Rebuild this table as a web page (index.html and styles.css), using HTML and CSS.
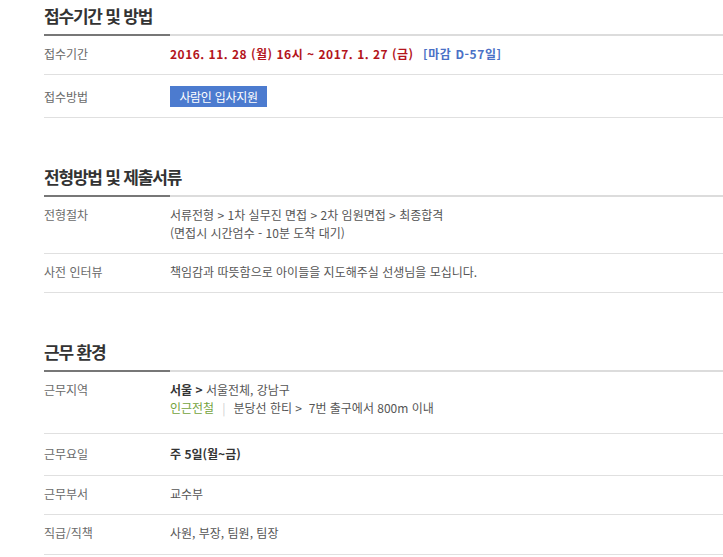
FILE: index.html
```html
<!DOCTYPE html>
<html lang="ko">
<head>
<meta charset="utf-8">
<link rel="stylesheet" href="styles.css">
</head>
<body>
<div class="page">
  <section class="sec">
    <h2 class="sec-title">접수기간 및 방법</h2>
    <div class="row">
      <div class="label">접수기간</div>
      <div class="value"><span class="date">2016. 11. 28 (월) 16시 ~ 2017. 1. 27 (금)</span> <span class="dday">[마감 D-57일]</span></div>
    </div>
    <div class="row row-btn">
      <div class="label lbl-btn">접수방법</div>
      <div class="value"><span class="apply-btn">사람인 입사지원</span></div>
    </div>
  </section>

  <section class="sec">
    <h2 class="sec-title">전형방법 및 제출서류</h2>
    <div class="row">
      <div class="label">전형절차</div>
      <div class="value">서류전형 &gt; 1차 실무진 면접 &gt; 2차 임원면접 &gt; 최종합격<br>(면접시 시간엄수 - 10분 도착 대기)</div>
    </div>
    <div class="row">
      <div class="label">사전 인터뷰</div>
      <div class="value">책임감과 따뜻함으로 아이들을 지도해주실 선생님을 모십니다.</div>
    </div>
  </section>

  <section class="sec">
    <h2 class="sec-title">근무 환경</h2>
    <div class="row row-tall">
      <div class="label">근무지역</div>
      <div class="value"><b class="strong">서울</b> <b class="strong">&gt;</b> 서울전체, 강남구<br><span class="subway">인근전철</span><span class="sep">|</span>분당선 한티 &gt;&nbsp; 7번 출구에서 800m 이내</div>
    </div>
    <div class="row row-wide">
      <div class="label">근무요일</div>
      <div class="value"><b class="strong">주 5일(월~금)</b></div>
    </div>
    <div class="row">
      <div class="label">근무부서</div>
      <div class="value">교수부</div>
    </div>
    <div class="row row-last">
      <div class="label">직급/직책</div>
      <div class="value">사원, 부장, 팀원, 팀장</div>
    </div>
  </section>
</div>
</body>
</html>
```

FILE: styles.css
```css
html, body {
  margin: 0;
  padding: 0;
  background: #fff;
}
body {
  font-family: "Noto Sans CJK KR", "Noto Sans", sans-serif;
  font-size: 12px;
  color: #555;
}
.page {
  padding-left: 44px;
}
.sec + .sec {
  margin-top: 43px;
}
.sec-title {
  margin: 0;
  padding: 4px 0 6px;
  font-size: 17px;
  line-height: 24px;
  font-weight: 700;
  letter-spacing: -1.2px;
  color: #333;
  border-bottom: 2px solid transparent;
  background: linear-gradient(to right, #777 126px, #dcdcdc 126px) left bottom / 100% 2px no-repeat;
  background-origin: border-box;
  background-clip: border-box;
}
.row {
  display: grid;
  grid-template-columns: 126px 1fr;
  padding: 9px 0 11px;
  line-height: 18px;
  border-bottom: 1px solid #e0e0e0;
}
.row-btn {
  padding: 11px 0 10px;
}
.row-tall {
  padding-bottom: 16px;
}
.row-wide {
  padding: 11px 0 12px;
}
.row-last {
  padding-bottom: 12px;
}
.label {
  color: #6a6a6a;
}
.lbl-btn {
  align-self: center;
}
.value {
  color: #555;
}
.date {
  color: #b3141c;
  font-weight: 700;
  letter-spacing: 0.5px;
}
.dday {
  color: #4a70c6;
  font-weight: 700;
  margin-left: 6px;
  letter-spacing: 0.6px;
}
.apply-btn {
  display: inline-block;
  height: 21px;
  line-height: 21px;
  width: 97px;
  box-sizing: border-box;
  text-align: center;
  background: #4c7bcf;
  color: #fff;
  letter-spacing: -0.3px;
}
.strong {
  color: #333;
  font-weight: 700;
}
.subway {
  color: #74a33d;
}
.sep {
  color: #d0d0d0;
  margin: 0 8px;
}
```
